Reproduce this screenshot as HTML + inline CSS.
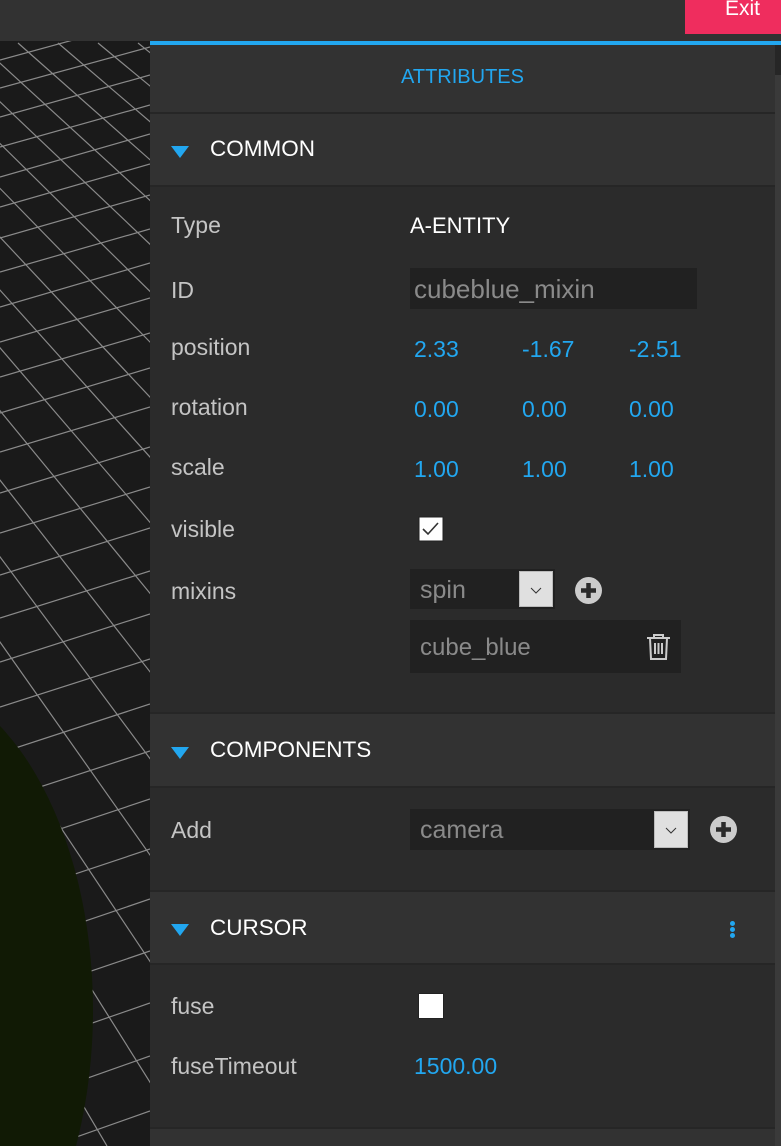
<!DOCTYPE html>
<html><head><meta charset="utf-8"><style>
*{margin:0;padding:0;box-sizing:border-box}
body{width:781px;height:1146px;overflow:hidden;background:#1a1a1a;font-family:"Liberation Sans",sans-serif;position:relative}
.a{position:absolute;white-space:nowrap}
.hd{position:absolute;left:150px;width:625px;background:#323232}
.bd{position:absolute;left:150px;width:625px;background:#2b2b2b}
.ht{position:absolute;left:60px;color:#fff;font-size:22.5px}
.tri{position:absolute;left:21px;width:0;height:0;border-left:9px solid transparent;border-right:9px solid transparent;border-top:12px solid #22a7f0}
.lb{color:#c4c4c4;font-size:23px;left:171px}
.bl{color:#22a7f0;font-size:23px}
.inp{position:absolute;background:#212121;color:#8a8a8a;font-size:25px;padding-left:10px}
.sel{position:absolute;background:#e0e0e0;border:1px solid #bbb}
</style></head><body>
<svg class="a" style="left:0;top:41px" width="150" height="1105" viewBox="0 41 150 1105">
<path stroke="#8a8a8a" stroke-width="1.2" fill="none" d="
M-582,43L25,1146 M-542,43L107,1146 M-502,43L190,1146 M-462,43L273,1146 M-422,43L355,1146 M-382,43L438,1146 M-342,43L521,1146 M-302,43L604,1146 M-262,43L686,1146 M-222,43L769,1146 M-182,43L852,1146 M-142,43L935,1146 M-102,43L1017,1146 M-62,43L1100,1146 M-22,43L1183,1146 M18,43L1265,1146 M58,43L1348,1146 M98,43L1431,1146 M138,43L1514,1146
M0,60L150,19 M0,88L150,47 M0,117L150,75 M0,147L150,105 M0,177L150,134 M0,207L150,164 M0,238L150,195 M0,272L150,229 M0,307L150,263 M0,342L150,298 M0,377L150,333 M0,413L150,368 M0,452L150,407 M0,493L150,447 M0,533L150,487 M0,575L150,528 M0,618L150,571 M0,662L150,614 M0,707L150,659 M0,753L150,704 M0,800L150,751 M0,849L150,799 M0,899L150,849 M0,950L150,899 M0,1002L150,951 M0,1055L150,1003 M0,1109L150,1056 M0,1164L150,1111"/>
<ellipse cx="-105" cy="1010" rx="198" ry="335" fill="#111a05"/>
</svg>
<div class="a" style="left:0;top:0;width:781px;height:41px;background:#323232"></div>
<div class="a" style="left:685px;top:0;width:96px;height:34px;background:#ef2d5e;color:#fff;font-size:21px;padding-left:40px;line-height:18px">Exit</div>
<div class="a" style="left:150px;top:41px;width:631px;height:4px;background:#22a7f0"></div>
<div class="a" style="left:150px;top:45px;width:631px;height:1101px;background:#262626"></div>
<div class="a" style="left:775px;top:75px;width:6px;height:1071px;background:#3a3a3a"></div>

<div class="hd" style="top:45px;height:67px"><div class="a" style="left:0;width:625px;text-align:center;top:21px;color:#22a7f0;font-size:20px">ATTRIBUTES</div></div>

<div class="hd" style="top:114px;height:71px"><div class="tri" style="top:32px"></div><div class="ht" style="top:22px">COMMON</div></div>
<div class="bd" style="top:187px;height:525px"></div>
<div class="a lb" style="top:212px">Type</div>
<div class="a" style="left:410px;top:213px;color:#fff;font-size:22px">A-ENTITY</div>
<div class="a lb" style="top:277px">ID</div>
<div class="inp" style="left:410px;top:268px;width:287px;height:41px;line-height:43px;padding-left:4px;font-size:26px">cubeblue_mixin</div>
<div class="a lb" style="top:334px">position</div>
<div class="a bl" style="left:414px;top:336px">2.33</div><div class="a bl" style="left:522px;top:336px">-1.67</div><div class="a bl" style="left:629px;top:336px">-2.51</div>
<div class="a lb" style="top:394px">rotation</div>
<div class="a bl" style="left:414px;top:396px">0.00</div><div class="a bl" style="left:522px;top:396px">0.00</div><div class="a bl" style="left:629px;top:396px">0.00</div>
<div class="a lb" style="top:454px">scale</div>
<div class="a bl" style="left:414px;top:456px">1.00</div><div class="a bl" style="left:522px;top:456px">1.00</div><div class="a bl" style="left:629px;top:456px">1.00</div>
<div class="a lb" style="top:516px">visible</div>
<svg class="a" style="left:418px;top:516px" width="26" height="26"><rect x="1" y="1" width="24" height="24" fill="#fff" stroke="#222"/><path d="M5,13 L10,18 L20,7" stroke="#333" stroke-width="1.6" fill="none"/></svg>
<div class="a lb" style="top:578px">mixins</div>
<div class="inp" style="left:410px;top:569px;width:145px;height:40px;line-height:42px">spin</div>
<div class="sel" style="left:519px;top:571px;width:34px;height:36px"><svg width="32" height="34"><path d="M11,16 L16,21 L21,16" stroke="#333" fill="none"/></svg></div>
<svg class="a" style="left:574px;top:576px" width="30" height="30"><circle cx="14.5" cy="14.5" r="13.5" fill="#ccc"/><path d="M14.5,7V22M7,14.5H22" stroke="#2b2b2b" stroke-width="4.5"/></svg>
<div class="inp" style="left:410px;top:620px;width:271px;height:53px;line-height:55px;font-size:24px">cube_blue</div>
<svg class="a" style="left:645px;top:632px" width="28" height="30"><g stroke="#ccc" stroke-width="2" fill="none"><path d="M2,6H25M9,6V3H18V6M5,6L6,27H21L22,6M10,11V22M13.5,11V22M17,11V22"/></g></svg>

<div class="hd" style="top:714px;height:72px"><div class="tri" style="top:33px"></div><div class="ht" style="top:23px">COMPONENTS</div></div>
<div class="bd" style="top:788px;height:102px"></div>
<div class="a lb" style="top:817px">Add</div>
<div class="inp" style="left:410px;top:809px;width:280px;height:41px;line-height:43px">camera</div>
<div class="sel" style="left:654px;top:811px;width:34px;height:37px"><svg width="32" height="35"><path d="M11,16 L16,21 L21,16" stroke="#333" fill="none"/></svg></div>
<svg class="a" style="left:709px;top:815px" width="30" height="30"><circle cx="14.5" cy="14.5" r="13.5" fill="#ccc"/><path d="M14.5,7V22M7,14.5H22" stroke="#2b2b2b" stroke-width="4.5"/></svg>

<div class="hd" style="top:892px;height:71px"><div class="tri" style="top:32px"></div><div class="ht" style="top:23px">CURSOR</div>
<div class="a" style="left:580px;top:29px;width:5px;height:5px;border-radius:50%;background:#22a7f0;box-shadow:0 6px 0 #22a7f0,0 12px 0 #22a7f0"></div></div>
<div class="bd" style="top:965px;height:162px"></div>
<div class="a lb" style="top:993px">fuse</div>
<div class="a" style="left:418px;top:993px;width:26px;height:26px;background:#fff;border:1px solid #222"></div>
<div class="a lb" style="top:1053px">fuseTimeout</div>
<div class="a bl" style="left:414px;top:1053px">1500.00</div>
<div class="hd" style="top:1129px;height:17px"></div>
</body></html>
